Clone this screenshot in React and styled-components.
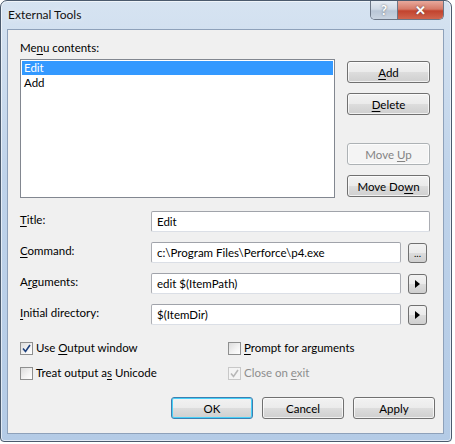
import React from "react";
import styled, { createGlobalStyle } from "styled-components";

const Global = createGlobalStyle`
  body {
    margin: 0;
    background: #ffffff;
    font-family: Lato, "Open Sans", "Liberation Sans", sans-serif;
    font-size: 11.5px;
    color: #000;
  }
`;

const Window = styled.div`
  width: 452px;
  height: 442px;
  box-sizing: border-box;
  display: flex;
  flex-direction: column;
  border: 1px solid #4b5a6d;
  border-radius: 7px 7px 4px 4px;
  background: linear-gradient(180deg, #d6e3f1 0%, #bfd3ea 40%, #b4cbe6 100%);
  box-shadow: inset 0 0 0 1px rgba(255, 255, 255, 0.6);
  padding: 0 7px 7px 6px;
`;

const TitleBar = styled.div`
  height: 28px;
  display: flex;
  align-items: flex-start;
`;

const Caption = styled.div`
  padding: 6px 0 0 1px;
  font-size: 12px;
  color: #111;
  text-shadow: 0 0 6px rgba(255, 255, 255, 0.9);
`;

const CaptionButtons = styled.div`
  margin-left: auto;
  display: flex;
  height: 18px;
  border: 1px solid #6b7686;
  border-top: none;
  border-radius: 0 0 5px 5px;
  overflow: hidden;
`;

const CaptionBtn = styled.div`
  width: ${(p) => p.$w}px;
  display: flex;
  align-items: center;
  justify-content: center;
  color: #fff;
  font-weight: bold;
  font-size: 13px;
  background: ${(p) =>
    p.$close
      ? "linear-gradient(180deg, #e8a99c 0%, #d67a68 45%, #c2432e 55%, #d0654e 100%)"
      : "linear-gradient(180deg, #e6ecf3 0%, #cfd9e5 45%, #b9c6d6 55%, #c9d4e1 100%)"};
  border-left: ${(p) => (p.$close ? "1px solid #6b7686" : "none")};
  text-shadow: 0 0 2px rgba(60, 60, 60, 0.8);
`;

const Client = styled.div`
  flex: 1;
  background: #f0f0f0;
  border: 1px solid #8ea1ba;
  padding: 10px 13px 0 12px;
  display: flex;
  flex-direction: column;
`;

const U = styled.span`
  text-decoration: underline;
  text-underline-offset: 2px;
`;

const Label = styled.div`
  line-height: 16px;
  color: ${(p) => (p.$disabled ? "#8d8d8d" : "#000")};
  white-space: nowrap;
`;

const TopRow = styled.div`
  display: flex;
  margin-top: 3px;
`;

const ListBox = styled.div`
  width: 317px;
  height: 139px;
  box-sizing: border-box;
  border: 1px solid #828790;
  background: #fff;
  padding: 1px 1px;
`;

const ListItem = styled.div`
  height: 14px;
  line-height: 14px;
  padding-left: 2px;
  margin-bottom: 1px;
  background: ${(p) => (p.$selected ? "#3399ff" : "transparent")};
  color: ${(p) => (p.$selected ? "#fff" : "#000")};
`;

const SideButtons = styled.div`
  margin-left: 12px;
  padding-top: 2px;
  display: flex;
  flex-direction: column;
  gap: 10px;
`;

const Button = styled.div`
  width: ${(p) => p.$w || 83}px;
  height: 22px;
  box-sizing: border-box;
  display: flex;
  align-items: center;
  justify-content: center;
  white-space: pre;
  border: 1px solid ${(p) => (p.$disabled ? "#adb2b5" : p.$default ? "#3c7fb1" : "#707070")};
  border-radius: 3px;
  color: ${(p) => (p.$disabled ? "#838383" : "#000")};
  background: ${(p) =>
    p.$disabled
      ? "#f4f4f4"
      : "linear-gradient(180deg, #f2f2f2 0%, #ebebeb 49%, #dddddd 50%, #cfcfcf 100%)"};
  box-shadow: ${(p) =>
    p.$default ? "inset 0 0 0 1px #48d0f8" : "inset 0 0 0 1px rgba(255,255,255,0.7)"};
  margin-top: ${(p) => p.$gapTop || 0}px;
`;

const Form = styled.div`
  margin-top: 13px;
  display: grid;
  grid-template-columns: 131px 1fr;
  row-gap: 10px;
  align-items: center;
`;

const FieldLabel = styled(Label)`
  margin-top: -3px;
`;

const FieldRow = styled.div`
  display: flex;
  align-items: center;
`;

const TextBox = styled.div`
  height: 21px;
  box-sizing: border-box;
  flex: 1;
  display: flex;
  align-items: center;
  padding-left: 5px;
  background: #fff;
  border: 1px solid #abadb3;
  border-top-color: #a0a3aa;
  border-bottom-color: #dbdfe6;
  border-radius: 2px;
  margin-right: ${(p) => (p.$withButton ? 7 : 0)}px;
`;

const SmallButton = styled.div`
  width: 19px;
  height: 20px;
  box-sizing: border-box;
  margin-right: 3px;
  display: flex;
  align-items: center;
  justify-content: center;
  border: 1px solid #707070;
  border-radius: 3px;
  font-size: 10px;
  line-height: 10px;
  background: linear-gradient(180deg, #f2f2f2 0%, #ebebeb 49%, #dddddd 50%, #cfcfcf 100%);
`;

const Checks = styled.div`
  margin-top: 15px;
  display: grid;
  grid-template-columns: 208px 1fr;
  row-gap: 9px;
`;

const CheckRow = styled.div`
  display: flex;
  align-items: center;
  gap: 3px;
  height: 16px;
`;

const Box = styled.div`
  width: 13px;
  height: 13px;
  box-sizing: border-box;
  border: 1px solid ${(p) => (p.$disabled ? "#c8c8c8" : "#8e8f8f")};
  background: ${(p) =>
    p.$disabled ? "#f4f4f4" : "linear-gradient(135deg, #dcdcdc 0%, #f4f4f4 60%, #ffffff 100%)"};
  display: flex;
  align-items: center;
  justify-content: center;
`;

const Footer = styled.div`
  margin-top: 16px;
  margin-right: -5px;
  display: flex;
  justify-content: flex-end;
  gap: 9px;
`;

const Check = ({ disabled }) => (
  <svg width="9" height="9" viewBox="0 0 9 9">
    <path
      d="M1 4.5 L3.5 7.5 L8 1"
      fill="none"
      stroke={disabled ? "#b8b8b8" : "#1c3f7c"}
      strokeWidth="1.6"
    />
  </svg>
);

const Arrow = () => (
  <svg width="5" height="8" viewBox="0 0 5 8">
    <path d="M0 0 L5 4 L0 8 Z" fill="#000" />
  </svg>
);

const CheckItem = ({ checked, disabled, children }) => (
  <CheckRow>
    <Box $disabled={disabled}>{checked && <Check disabled={disabled} />}</Box>
    <Label $disabled={disabled}>{children}</Label>
  </CheckRow>
);

export default function App() {
  return (
    <>
      <Global />
      <Window>
        <TitleBar>
          <Caption>External Tools</Caption>
          <CaptionButtons>
            <CaptionBtn $w={26}>?</CaptionBtn>
            <CaptionBtn $w={45} $close>
              ✕
            </CaptionBtn>
          </CaptionButtons>
        </TitleBar>
        <Client>
          <Label>
            Me<U>n</U>u contents:
          </Label>
          <TopRow>
            <ListBox>
              <ListItem $selected>Edit</ListItem>
              <ListItem>Add</ListItem>
            </ListBox>
            <SideButtons>
              <Button>
                <span>
                  <U>A</U>dd
                </span>
              </Button>
              <Button>
                <span>
                  <U>D</U>elete
                </span>
              </Button>
              <Button $disabled $gapTop={18}>
                <span>
                  Move <U>U</U>p
                </span>
              </Button>
              <Button>
                <span>
                  Move Do<U>w</U>n
                </span>
              </Button>
            </SideButtons>
          </TopRow>
          <Form>
            <FieldLabel>
              <U>T</U>itle:
            </FieldLabel>
            <FieldRow>
              <TextBox>Edit</TextBox>
            </FieldRow>
            <FieldLabel>
              <U>C</U>ommand:
            </FieldLabel>
            <FieldRow>
              <TextBox $withButton>c:\Program Files\Perforce\p4.exe</TextBox>
              <SmallButton>...</SmallButton>
            </FieldRow>
            <FieldLabel>
              A<U>r</U>guments:
            </FieldLabel>
            <FieldRow>
              <TextBox $withButton>edit $(ItemPath)</TextBox>
              <SmallButton>
                <Arrow />
              </SmallButton>
            </FieldRow>
            <FieldLabel>
              <U>I</U>nitial directory:
            </FieldLabel>
            <FieldRow>
              <TextBox $withButton>$(ItemDir)</TextBox>
              <SmallButton>
                <Arrow />
              </SmallButton>
            </FieldRow>
          </Form>
          <Checks>
            <CheckItem checked>
              Use <U>O</U>utput window
            </CheckItem>
            <CheckItem>
              <U>P</U>rompt for arguments
            </CheckItem>
            <CheckItem>
              Treat output a<U>s</U> Unicode
            </CheckItem>
            <CheckItem checked disabled>
              Close on <U>e</U>xit
            </CheckItem>
          </Checks>
          <Footer>
            <Button $w={82} $default>
              OK
            </Button>
            <Button $w={82}>Cancel</Button>
            <Button $w={82}>Apply</Button>
          </Footer>
        </Client>
      </Window>
    </>
  );
}
